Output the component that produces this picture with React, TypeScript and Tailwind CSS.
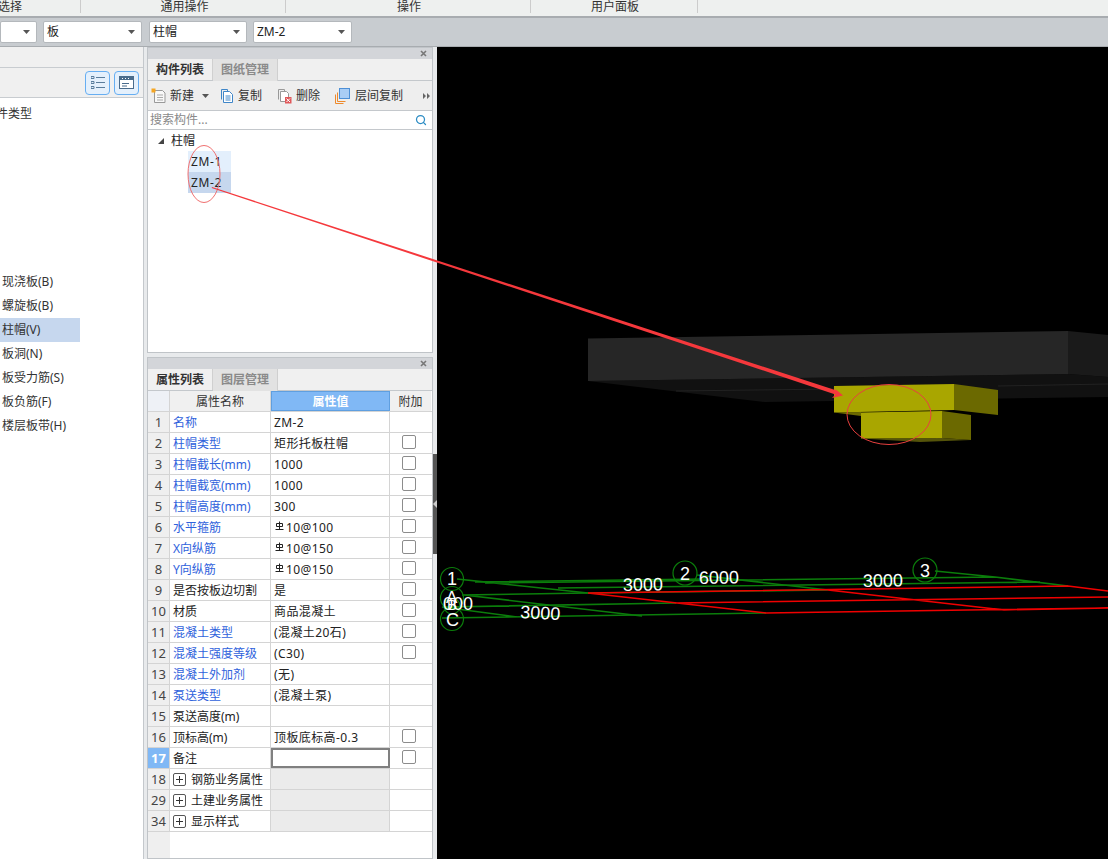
import { Search } from "lucide-react";

type Row = {
  no: number;
  name: string;
  value?: string;
  rebar?: string;
  blue?: boolean;
  check?: boolean;
  group?: boolean;
  active?: boolean;
};

const rows: Row[] = [
  { no: 1, name: "名称", value: "ZM-2", blue: true },
  { no: 2, name: "柱帽类型", value: "矩形托板柱帽", blue: true, check: true },
  { no: 3, name: "柱帽截长(mm)", value: "1000", blue: true, check: true },
  { no: 4, name: "柱帽截宽(mm)", value: "1000", blue: true, check: true },
  { no: 5, name: "柱帽高度(mm)", value: "300", blue: true, check: true },
  { no: 6, name: "水平箍筋", rebar: "10@100", blue: true, check: true },
  { no: 7, name: "X向纵筋", rebar: "10@150", blue: true, check: true },
  { no: 8, name: "Y向纵筋", rebar: "10@150", blue: true, check: true },
  { no: 9, name: "是否按板边切割", value: "是", check: true },
  { no: 10, name: "材质", value: "商品混凝土", check: true },
  { no: 11, name: "混凝土类型", value: "(混凝土20石)", blue: true, check: true },
  { no: 12, name: "混凝土强度等级", value: "(C30)", blue: true, check: true },
  { no: 13, name: "混凝土外加剂", value: "(无)", blue: true },
  { no: 14, name: "泵送类型", value: "(混凝土泵)", blue: true },
  { no: 15, name: "泵送高度(m)" },
  { no: 16, name: "顶标高(m)", value: "顶板底标高-0.3", check: true },
  { no: 17, name: "备注", check: true, active: true },
  { no: 18, name: "钢筋业务属性", group: true },
  { no: 29, name: "土建业务属性", group: true },
  { no: 34, name: "显示样式", group: true },
];

const boardTypes = ["现浇板(B)", "螺旋板(B)", "柱帽(V)", "板洞(N)", "板受力筋(S)", "板负筋(F)", "楼层板带(H)"];

function Caret() {
  return (
    <svg width="7" height="4" viewBox="0 0 7 4" className="shrink-0">
      <path d="M0 0h7L3.500 4z" fill="#555" />
    </svg>
  );
}

function Select({ label, width }: { label: string; width: string }) {
  return (
    <div className={`${width} h-[22px] bg-white border border-[#b4b8bc] rounded-[2px] flex items-center justify-between pl-[3px] pr-[6px] text-[#222]`}>
      <span>{label}</span>
      <Caret />
    </div>
  );
}

function CloseBar() {
  return (
    <div className="h-[11px] bg-[#d3d5d9] flex items-center justify-end pr-[5px]">
      <svg width="7" height="7" viewBox="0 0 7 7">
        <path d="M1 1l5 5M6 1L1 6" stroke="#777" strokeWidth="1.600" />
      </svg>
    </div>
  );
}

function Tabs({ active, other }: { active: string; other: string }) {
  return (
    <div className="h-[22px] bg-[#f0f0f0] border-b border-[#c4c8cc] flex font-bold">
      <div className="w-[65px] flex items-center justify-center text-[#333] border-r border-[#d0d0d0]">{active}</div>
      <div className="w-[65px] -mb-px flex items-center justify-center text-[#8a8a8a] bg-[#e2e2e2] border-r border-[#cfcfcf]">{other}</div>
    </div>
  );
}

function NewIcon() {
  return (
    <svg width="16" height="16" viewBox="0 0 16 16">
      <path d="M3.500 2.500h8l2.500 2.500v9.500H3.500z" fill="#f8f8f8" stroke="#999" />
      <path d="M6 7h6M6 9.500h6M6 12h6" stroke="#aaa" />
      <rect x="0.500" y="0.500" width="4" height="4" fill="#f5a623" />
    </svg>
  );
}

function CopyIcon() {
  return (
    <svg width="14" height="16" viewBox="0 0 14 16">
      <path d="M1.500 11.500v-10h6v2" fill="none" stroke="#3f86c8" />
      <path d="M3.500 3.500h6l3 3v8h-9z" fill="#fff" stroke="#3f86c8" />
      <path d="M5.500 8h5M5.500 10h5M5.500 12h5" stroke="#3f86c8" />
    </svg>
  );
}

function DeleteIcon() {
  return (
    <svg width="15" height="16" viewBox="0 0 15 16">
      <path d="M1.500 1.500h6v2M1.500 1.500v10" fill="none" stroke="#999" />
      <path d="M3.500 3.500h6l2 2v8h-8z" fill="#fff" stroke="#999" />
      <rect x="8" y="9" width="6.500" height="6.500" fill="#e0585a" />
      <path d="M9.500 10.500l3.500 3.500M13 10.500L9.500 14" stroke="#fff" />
    </svg>
  );
}

function FloorCopyIcon() {
  return (
    <svg width="15" height="16" viewBox="0 0 15 16">
      <path d="M.5 15.500v-9M.5 15.500h8M2.500 13.500v-9M2.500 13.500h8" fill="none" stroke="#ee8a2c" />
      <rect x="4.500" y="0.500" width="10" height="10" fill="#a9cdf5" stroke="#4d8fd6" />
    </svg>
  );
}

function RebarMark() {
  return (
    <svg width="9" height="10" viewBox="0 0 9 10" className="shrink-0 ml-[1px] mr-[2px] -mt-[3px]">
      <path d="M1.500 2.500h6v3h-6zM4.500 .5v8M.5 8.500h8" fill="none" stroke="#222" />
    </svg>
  );
}

function PropertyRow({ row }: { row: Row }) {
  const nameColor = row.blue ? "text-[#2f62dc]" : "text-[#222]";
  const valueCell = row.active
    ? "border-2 border-[#808080] bg-white"
    : row.group
      ? "border-r border-[#d4d4d4] bg-[#ebebeb]"
      : "border-r border-[#d4d4d4]";
  return (
    <div className="h-[21px] flex border-b border-[#d4d4d4]">
      <div className={`w-[22px] shrink-0 border-r border-[#d4d4d4] flex items-center justify-center pt-[1px] text-[13px] ${row.active ? "bg-[#80b8f5] text-white font-bold" : "bg-[#efefef] text-[#444]"}`}>
        {row.no}
      </div>
      <div className={`w-[101px] shrink-0 border-r border-[#d4d4d4] flex items-center pl-[3px] pt-[1px] ${nameColor}`}>
        {row.group && (
          <span className="w-[13px] h-[13px] mr-[5px] border border-[#555] rounded-[2px] flex items-center justify-center">
            <svg width="7" height="7" viewBox="0 0 7 7">
              <path d="M0 3.500h7M3.500 0v7" stroke="#333" />
            </svg>
          </span>
        )}
        <span className="whitespace-nowrap">{row.name}</span>
      </div>
      <div className={`w-[119px] shrink-0 flex items-center pl-[3px] pt-[1px] text-[#222] tracking-[0.4px] ${valueCell}`}>
        {row.rebar ? (
          <>
            <RebarMark />
            <span>{row.rebar}</span>
          </>
        ) : (
          row.value
        )}
      </div>
      <div className="w-[41px] shrink-0 flex justify-center pt-[2px] pr-[3px]">
        {row.check && <span className="w-[14px] h-[14px] bg-white border border-[#8c8c8c] rounded-[2px]" />}
      </div>
    </div>
  );
}

function ModelView() {
  return (
    <svg viewBox="437 47 671 812" className="w-full h-full block">
      {/* slab */}
      <polygon points="588,381 765,402 1108,397 1108,377 1068,374" fill="#111111" />
      <polygon points="588,338.500 1068,331 1068,374 588,381" fill="#262626" />
      <polygon points="1068,331 1108,335 1108,377 1068,374" fill="#1a1a1a" />
      <path d="M676 391L834 389M998 386L1108 384" stroke="#222" />
      {/* column cap */}
      <polygon points="834,412.500 861,416 861,412" fill="#6b6900" />
      <polygon points="861,438.500 920,442 971,440 942,438" fill="#55540a" />
      <polygon points="834,386 954,384 954,410 834,412.500" fill="#a9a600" />
      <polygon points="954,384 998,390 998,415 954,410" fill="#6b6900" />
      <polygon points="861,412.500 942,411 942,438 861,438.500" fill="#a9a600" />
      <polygon points="942,411 971,415 971,440 942,438" fill="#6b6900" />
      {/* axis grid */}
      <g fill="none" stroke="#0b7d0b" strokeWidth="1.600">
        <path d="M457 579L588 593M485 583L995 577M935 571L995 577L1068 586M558 588L1040 582" />
        <path d="M462 595L588 593L828 590M697 575L828 590M464 595L642 616M445 607L676 603" />
        <path d="M442 618L766 613M442 607L517 617M475 582L706 579" />
      </g>
      <g fill="none" stroke="#0b7d0b" strokeWidth="1.200">
        <circle cx="452" cy="579" r="11.500" />
        <circle cx="452" cy="598" r="11.500" />
        <circle cx="452" cy="606" r="8" />
        <circle cx="452" cy="619" r="11.500" />
        <circle cx="685" cy="573" r="12" />
        <circle cx="925" cy="570" r="12" />
      </g>
      <g fill="none" stroke="#f00000" strokeWidth="1.600">
        <path d="M588 593L1068 586L1108 591M828 590L1004 610L1108 608M588 593L766 613L1108 608M676 603L1108 597" />
      </g>
      <g fill="#ffffff" style={{ fontFamily: '"Liberation Sans", sans-serif', fontSize: 18 }}>
        <text x="623" y="591" transform="rotate(-1 623 591)">3000</text>
        <text x="699" y="584" transform="rotate(-1 699 584)">6000</text>
        <text x="863" y="587" transform="rotate(-1 863 587)">3000</text>
        <text x="520" y="618" transform="rotate(3 520 618)">3000</text>
        <text x="443" y="610">000</text>
        <text x="447" y="585" fontSize="18">1</text>
        <text x="446" y="603" fontSize="17">A</text>
        <text x="447" y="610" fontSize="15">B</text>
        <text x="446" y="626" fontSize="18">C</text>
        <text x="680" y="580" fontSize="18">2</text>
        <text x="920" y="577" fontSize="18">3</text>
      </g>
    </svg>
  );
}

export default function App() {
  return (
    <div className="relative w-[1108px] h-[859px] overflow-hidden flex flex-col bg-[#e8eaec] text-[12px] leading-none font-['Noto_Sans','Noto_Sans_CJK_SC',sans-serif]">
      {/* Ribbon group labels */}
      <div className="h-[18px] shrink-0 bg-[#eef0ef] border-b-2 border-[#a8acb0] flex text-[#333] pb-[3px]">
        <div className="w-[81px] shrink-0 border-r border-[#ccc] flex justify-end items-center pr-[58px] whitespace-nowrap">选择</div>
        <div className="w-[205px] shrink-0 border-r border-[#ccc] flex justify-center items-center pl-[3px]">通用操作</div>
        <div className="w-[245px] shrink-0 border-r border-[#ccc] flex justify-center items-center pl-[2px]">操作</div>
        <div className="w-[167px] shrink-0 border-r border-[#ccc] flex justify-center items-center pl-[2px]">用户面板</div>
      </div>

      {/* Component selectors */}
      <div className="h-[29px] shrink-0 bg-[#c8ccd0] border-b border-[#a8acb0] flex items-center">
        <Select label="" width="w-[37px] ml-0" />
        <div className="w-[6px]" />
        <Select label="板" width="w-[99px]" />
        <div className="w-[7px]" />
        <Select label="柱帽" width="w-[98px]" />
        <div className="w-[6px]" />
        <Select label="ZM-2" width="w-[99px]" />
      </div>

      <div className="flex-1 flex min-h-0">
        {/* Left navigation */}
        <div className="w-[144px] shrink-0 bg-white border-r border-[#c4c8cc] flex flex-col overflow-hidden text-[#333]">
          <div className="h-[21px] shrink-0 bg-[#f0f0f0] border-b border-[#c8ccd0]" />
          <div className="h-[30px] shrink-0 bg-[#f0f0f0] border-b border-[#c8ccd0] flex items-center justify-end gap-[4px] pr-[4px]">
            <div className="w-[25px] h-[24px] bg-[#e4f0fc] border border-[#66aef2] rounded-[4px] flex items-center justify-center">
              <svg width="14" height="13" viewBox="0 0 14 13">
                <path d="M0 .5h3v2H0zM0 5.500h3v2H0zM0 10.500h3v2H0z" fill="none" stroke="#5a7d9c" />
                <path d="M5 1.500h9M5 6.500h9M5 11.500h9" stroke="#5a7d9c" />
              </svg>
            </div>
            <div className="w-[25px] h-[24px] bg-[#e4f0fc] border border-[#66aef2] rounded-[4px] flex items-center justify-center">
              <svg width="15" height="13" viewBox="0 0 15 13">
                <rect x="0.500" y="0.500" width="14" height="12" fill="#fff" stroke="#4a6c8c" />
                <path d="M1 1h13v3H1z" fill="#4a6c8c" />
                <path d="M3 7.500h7M3 10h5" stroke="#4a6c8c" />
                <path d="M3 2.500h1M6 2.500h1M9 2.500h1" stroke="#fff" />
              </svg>
            </div>
          </div>
          <div className="h-[172px] shrink-0 pt-[10px] -ml-[4px] whitespace-nowrap">件类型</div>
          <div className="flex flex-col">
            {boardTypes.map((item) => (
              <div key={item} className={`w-[80px] h-[24px] flex items-center pl-[2px] whitespace-nowrap ${item === "柱帽(V)" ? "bg-[#c6d7ee]" : ""}`}>
                {item}
              </div>
            ))}
          </div>
        </div>

        {/* Middle panels */}
        <div className="w-[293px] shrink-0 pl-[3px] pr-[4px] pt-0 flex flex-col">
          <div className="h-[306px] shrink-0 bg-white border border-[#c0c4c8] flex flex-col">
            <CloseBar />
            <Tabs active="构件列表" other="图纸管理" />
            <div className="h-[30px] shrink-0 bg-[#eeeeee] border-b border-[#c4c8cc] flex items-center pl-[3px] text-[#333] whitespace-nowrap">
              <NewIcon />
              <span className="ml-[3px]">新建</span>
              <span className="ml-[8px] mr-[11px]"><Caret /></span>
              <CopyIcon />
              <span className="ml-[4px] mr-[15px]">复制</span>
              <DeleteIcon />
              <span className="ml-[4px] mr-[15px]">删除</span>
              <FloorCopyIcon />
              <span className="ml-[5px]">层间复制</span>
              <svg width="7" height="6" viewBox="0 0 7 6" className="ml-[20px]">
                <path d="M0 0l3 3-3 3zM4 0l3 3-3 3z" fill="#666" />
              </svg>
            </div>
            <div className="h-[19px] shrink-0 bg-white border-b border-[#c4c8cc] flex items-center justify-between pl-[2px] pr-[5px] text-[#8a8a8a]">
              <span>搜索构件...</span>
              <Search size={12} strokeWidth={2.5} className="text-[#2c8cc4]" />
            </div>
            <div className="flex-1 pt-[1px] text-[#222]">
              <div className="h-[20px] flex items-center pl-[10px]">
                <svg width="6" height="6" viewBox="0 0 6 6">
                  <path d="M6 0v6H0z" fill="#444" />
                </svg>
                <span className="ml-[7px]">柱帽</span>
              </div>
              <div className="ml-[40px] w-[43px] tracking-[0.6px]">
                <div className="h-[21px] bg-[#e3effc] flex items-center pl-[3px]">ZM-1</div>
                <div className="h-[21px] bg-[#c6d7ee] flex items-center pl-[3px]">ZM-2</div>
              </div>
            </div>
          </div>

          <div className="h-[4px] shrink-0" />

          <div className="flex-1 min-h-0 bg-white border border-[#c0c4c8] flex flex-col relative">
            <CloseBar />
            <Tabs active="属性列表" other="图层管理" />
            <div className="h-[21px] shrink-0 flex border-b border-[#d4d4d4] text-[#333]">
              <div className="w-[22px] shrink-0 bg-[#eef1f6] border-r border-[#d4d4d4]" />
              <div className="w-[101px] shrink-0 bg-[#f0f0f0] border-r border-[#d4d4d4] flex items-center justify-center pt-[1px]">属性名称</div>
              <div className="w-[119px] shrink-0 bg-[#80b8f5] border border-[#5f9fe0] flex items-center justify-center pt-[1px] text-white font-bold">属性值</div>
              <div className="w-[41px] shrink-0 bg-[#f0f0f0] flex items-center justify-center pt-[1px]">附加</div>
            </div>
            {rows.map((row) => (
              <PropertyRow key={row.no} row={row} />
            ))}
            <div className="flex-1 flex">
              <div className="w-[22px] bg-[#efefef]" />
            </div>
          </div>
        </div>

        {/* 3D view */}
        <div className="flex-1 min-w-0 bg-black">
          <ModelView />
        </div>
      </div>

      {/* Splitter handle */}
      <div className="absolute left-[433px] top-[454px] w-[4px] h-[100px] bg-[#555] flex items-center">
        <svg width="4" height="8" viewBox="0 0 4 8">
          <path d="M4 0v8L0 4z" fill="#ccc" />
        </svg>
      </div>

      {/* Red markup drawn over the screenshot */}
      <svg viewBox="0 0 1108 859" className="absolute inset-0 w-full h-full pointer-events-none">
        <ellipse cx="204" cy="174" rx="16" ry="28.500" fill="none" stroke="#f07070" />
        <ellipse cx="889" cy="414.500" rx="42" ry="30" fill="none" stroke="#e8403f" />
        <polygon points="212,187 836.600,390.600 833,387 843,395.500 832,398 835.400,394.400 211.700,188" fill="#f5383c" />
      </svg>
    </div>
  );
}
